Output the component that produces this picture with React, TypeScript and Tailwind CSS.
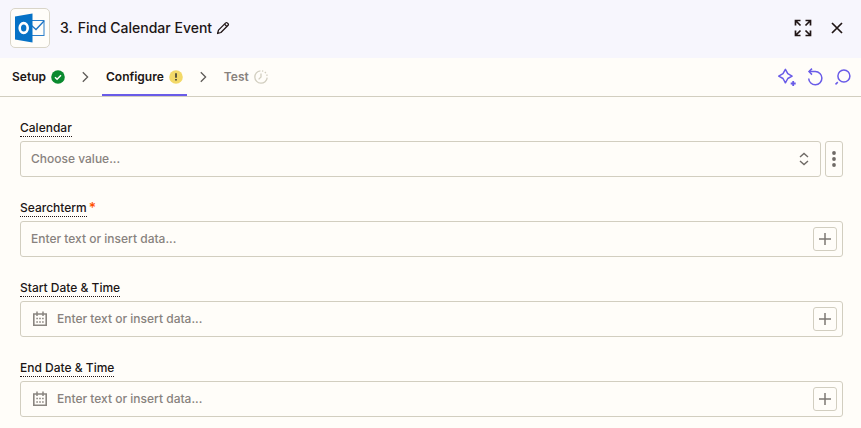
import { useState } from 'react'
import type { ReactNode } from 'react'

function OutlookLogo() {
  return (
    <svg viewBox="0 0 32 32" className="h-8 w-8" aria-hidden="true">
      <rect x="17.5" y="8.5" width="12.5" height="15" fill="#fffdf9" stroke="#2b7fcb" />
      <path d="M17.5 13.5l4.5 4 8-8.5" fill="none" stroke="#1f74c4" strokeWidth="1.3" />
      <path d="M1 4.5L18.5 1.5v29L1 27.5z" fill="#0672c6" />
      <ellipse cx="9.7" cy="16" rx="4" ry="4.9" fill="none" stroke="#fff" strokeWidth="2.6" />
    </svg>
  )
}

function PencilIcon() {
  return (
    <svg viewBox="0 0 14 14" className="h-[14px] w-[14px]" fill="none" stroke="currentColor" strokeWidth="1.3" strokeLinejoin="round" aria-hidden="true">
      <path d="M1.6 12.5l.9-3.4 7.2-7.2a1.1 1.1 0 0 1 1.6 0l.8.8a1.1 1.1 0 0 1 0 1.6l-7.2 7.2z" />
      <path d="M8.6 3.2l2.2 2.2" />
    </svg>
  )
}

function ExpandIcon() {
  return (
    <svg viewBox="0 0 18 18" className="h-[18px] w-[18px]" fill="none" stroke="currentColor" strokeWidth="1.7" aria-hidden="true">
      <path d="M1.5 6.5v-5h5M1.5 1.5l5 5" />
      <path d="M11.5 1.5h5v5M16.5 1.5l-5 5" />
      <path d="M6.5 16.5h-5v-5M1.5 16.5l5-5" />
      <path d="M16.5 11.5v5h-5M16.5 16.5l-5-5" />
    </svg>
  )
}

function CloseIcon() {
  return (
    <svg viewBox="0 0 12 12" className="h-3 w-3" fill="none" stroke="currentColor" strokeWidth="1.7" aria-hidden="true">
      <path d="M1 1l10 10M11 1L1 11" />
    </svg>
  )
}

function CheckBadge() {
  return (
    <svg viewBox="0 0 14 14" className="h-[14px] w-[14px]" aria-hidden="true">
      <circle cx="7" cy="7" r="6.8" fill="#0a8a2f" />
      <path d="M4 7.2l2.1 2.1 3.9-4" fill="none" stroke="#fff" strokeWidth="1.5" />
    </svg>
  )
}

function WarningBadge() {
  return (
    <svg viewBox="0 0 14 14" className="h-[14px] w-[14px]" aria-hidden="true">
      <circle cx="7" cy="7" r="6.8" fill="#f3d968" />
      <path d="M7 3.3v4.4M7 9v1.6" fill="none" stroke="#2d2e2e" strokeWidth="1.5" />
    </svg>
  )
}

function PendingIcon() {
  return (
    <svg viewBox="0 0 14 14" className="h-[14px] w-[14px]" fill="none" stroke="#d2cec0" strokeWidth="1.3" aria-hidden="true">
      <path d="M6.4 .8A6.2 6.2 0 1 0 13.2 7.6" />
      <path d="M7 .8a6.2 6.2 0 0 1 6.2 6.2" strokeDasharray="1.4 1.6" strokeDashoffset="-1" />
      <path d="M7 3.4V7L4.6 9.4" />
    </svg>
  )
}

function ChevronIcon() {
  return (
    <svg viewBox="0 0 8 12" className="h-3 w-2" fill="none" stroke="#5f5b58" strokeWidth="1.3" aria-hidden="true">
      <path d="M1.8 1.2L6.6 6l-4.8 4.8" />
    </svg>
  )
}

function SparkleIcon() {
  return (
    <svg viewBox="0 0 20 20" className="h-5 w-5" fill="none" stroke="currentColor" strokeWidth="1.5" strokeLinejoin="round" aria-hidden="true">
      <path d="M8.4 2.4l2.4 4.3 4.3 2.4-4.3 2.4-2.4 4.3-2.4-4.3-4.3-2.4 4.3-2.4z" />
      <path d="M16.2 14v5M13.7 16.5h5" strokeWidth="1.8" />
    </svg>
  )
}

function UndoIcon() {
  return (
    <svg viewBox="0 0 20 20" className="h-5 w-5" fill="none" stroke="currentColor" strokeWidth="1.5" aria-hidden="true">
      <path d="M4 4.6h6.3a6.6 6.6 0 1 1-6.6 6.9" />
      <path d="M7 1.6L4 4.6l3 3" />
    </svg>
  )
}

function LoupeIcon() {
  return (
    <svg viewBox="0 0 20 20" className="h-5 w-5" fill="none" stroke="currentColor" strokeWidth="1.5" aria-hidden="true">
      <circle cx="10.9" cy="9" r="6" />
      <path d="M4.8 15.1l-2.3 2.3" />
    </svg>
  )
}

function CalendarIcon() {
  return (
    <svg viewBox="0 0 16 16" className="h-4 w-4 shrink-0" fill="none" stroke="#8a8580" aria-hidden="true">
      <path d="M1.8 3h12.4v11.2H1.8z" strokeWidth="1.6" />
      <path d="M5 .5v4.5M11 .5v4.5" strokeWidth="1.5" />
      <path d="M4.3 7.6h8M4.3 11h8" strokeWidth="1.5" strokeDasharray="1.6 1.3" />
    </svg>
  )
}

function PlusIcon() {
  return (
    <svg viewBox="0 0 12 12" className="h-3 w-3" fill="none" stroke="#7d7873" strokeWidth="1.5" aria-hidden="true">
      <path d="M6 0v12M0 6h12" />
    </svg>
  )
}

interface StepProps {
  label: string
  active: boolean
  muted?: boolean
  icon: ReactNode
  onClick: () => void
}

function Step({ label, active, muted, icon, onClick }: StepProps) {
  return (
    <button
      type="button"
      onClick={onClick}
      className={`flex items-center gap-[5px] border-b-2 px-1 pt-[2px] text-xs font-semibold ${
        active ? 'border-[#695be8]' : 'border-transparent'
      } ${muted ? 'text-[#88827e]' : 'text-[#201515]'}`}
    >
      {label}
      {icon}
    </button>
  )
}

function StepSeparator() {
  return (
    <span className="flex w-[33px] items-center justify-center">
      <ChevronIcon />
    </span>
  )
}

interface FieldProps {
  id: string
  label: string
  required?: boolean
  children: ReactNode
}

function Field({ id, label, required, children }: FieldProps) {
  return (
    <div>
      <div className="mb-1 flex gap-[2px] text-xs leading-[13px] font-medium">
        <label htmlFor={id} className="border-b border-dotted border-[#201515] pb-[2px]">{label}</label>
        {required && <span className="text-sm leading-[13px] text-[#ff4f00]">*</span>}
      </div>
      {children}
    </div>
  )
}

function DataInput({ id, date }: { id: string; date?: boolean }) {
  const [value, setValue] = useState('')

  return (
    <div className="flex h-9 items-center rounded-[3px] border border-[#d2cec0] pr-[5px] pl-[10px]">
      {date && (
        <span className="mr-[9px] ml-[1px]">
          <CalendarIcon />
        </span>
      )}
      <input
        id={id}
        type="text"
        value={value}
        onChange={e => setValue(e.target.value)}
        placeholder="Enter text or insert data..."
        className="min-w-0 flex-1 bg-transparent text-xs font-medium outline-none placeholder:text-[#88827e]"
      />
      <button
        type="button"
        aria-label="Insert data"
        className="flex h-6 w-6 items-center justify-center rounded-[3px] border border-[#d2cec0]"
      >
        <PlusIcon />
      </button>
    </div>
  )
}

export default function App() {
  const [step, setStep] = useState('configure')

  return (
    <div className="min-h-screen bg-[#fffdf9] font-['Inter',sans-serif] text-[#201515]">
      {/* Header */}
      <header className="flex h-[58px] items-center justify-between bg-[#f7f6fd] pr-3 pl-[10px] pb-[2px]">
        <div className="flex items-center">
          <span className="flex h-10 w-10 items-center justify-center rounded-[5px] border border-[#d9d5c9] bg-[#fffdf9]">
            <OutlookLogo />
          </span>
          <h1 className="ml-[10px] flex gap-[5px] text-sm font-medium">
            <span>3.</span>
            <span>Find Calendar Event</span>
          </h1>
          <button type="button" aria-label="Rename step" className="ml-1">
            <PencilIcon />
          </button>
        </div>
        <div className="flex items-center gap-[10px]">
          <button type="button" aria-label="Expand" className="flex h-6 w-6 items-center justify-center">
            <ExpandIcon />
          </button>
          <button type="button" aria-label="Close" className="flex h-6 w-6 items-center justify-center">
            <CloseIcon />
          </button>
        </div>
      </header>

      {/* Steps */}
      <div className="flex h-[39px] justify-between border-b border-[#d2cec0] px-2">
        <nav className="flex">
          <Step label="Setup" active={step === 'setup'} icon={<CheckBadge />} onClick={() => setStep('setup')} />
          <StepSeparator />
          <Step label="Configure" active={step === 'configure'} icon={<WarningBadge />} onClick={() => setStep('configure')} />
          <StepSeparator />
          <Step label="Test" active={step === 'test'} muted icon={<PendingIcon />} onClick={() => setStep('test')} />
        </nav>
        <div className="flex items-center gap-2 text-[#695be8]">
          <button type="button" aria-label="Copilot"><SparkleIcon /></button>
          <button type="button" aria-label="Undo"><UndoIcon /></button>
          <button type="button" aria-label="Search"><LoupeIcon /></button>
        </div>
      </div>

      {/* Fields */}
      <form className="flex flex-col gap-6 pt-6 pr-[18px] pb-3 pl-5">
        <Field id="calendar" label="Calendar">
          <div className="flex h-9 gap-1">
            <div className="relative flex-1">
              <select
                id="calendar"
                defaultValue=""
                className="h-full w-full appearance-none rounded-[3px] border border-[#d2cec0] bg-transparent px-[10px] text-xs font-medium text-[#88827e] outline-none"
              >
                <option value="">Choose value...</option>
              </select>
              <svg viewBox="0 0 10 14" className="pointer-events-none absolute inset-y-0 right-3 my-auto h-[14px] w-[10px]" fill="none" stroke="#6f6a66" strokeWidth="1.4" aria-hidden="true">
                <path d="M1 5l4-3.6L9 5M1 9l4 3.6L9 9" />
              </svg>
            </div>
            <button
              type="button"
              aria-label="More options"
              className="flex w-[18px] items-center justify-center rounded-[3px] border border-[#d2cec0]"
            >
              <svg viewBox="0 0 4 16" className="h-4 w-1" fill="#6f6a66" aria-hidden="true">
                <circle cx="2" cy="2" r="1.9" />
                <circle cx="2" cy="8" r="1.9" />
                <circle cx="2" cy="14" r="1.9" />
              </svg>
            </button>
          </div>
        </Field>
        <Field id="searchterm" label="Searchterm" required>
          <DataInput id="searchterm" />
        </Field>
        <Field id="start" label="Start Date & Time">
          <DataInput id="start" date />
        </Field>
        <Field id="end" label="End Date & Time">
          <DataInput id="end" date />
        </Field>
      </form>
    </div>
  )
}
